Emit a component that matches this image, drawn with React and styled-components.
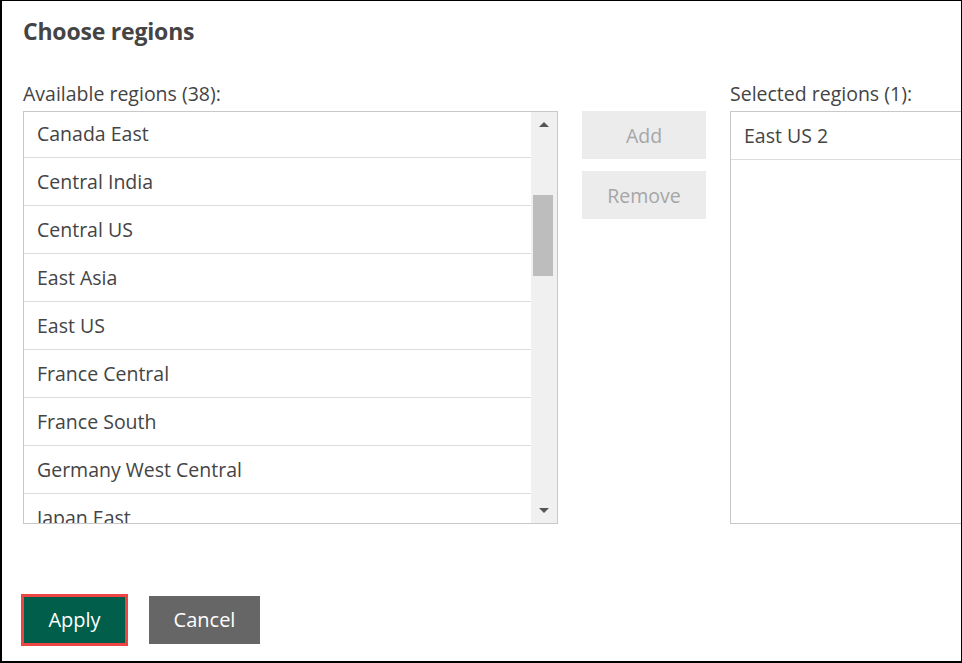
import React from 'react'
import styled, { createGlobalStyle } from 'styled-components'

const GlobalStyle = createGlobalStyle`
  html, body {
    margin: 0;
    padding: 0;
    background: #fff;
  }
  body {
    font-family: 'Open Sans', 'Liberation Sans', sans-serif;
    color: #444;
  }
`

const Frame = styled.div`
  box-sizing: border-box;
  width: 962px;
  height: 663px;
  border: 1px solid #000;
  border-left-width: 2px;
  border-bottom-width: 2px;
  overflow: hidden;
  padding: 14px 0 0 21px;
  display: flex;
  flex-direction: column;
`

const Title = styled.h2`
  margin: 0;
  font-size: 23px;
  font-weight: 700;
  color: #444;
  letter-spacing: -0.2px;
`

const Columns = styled.div`
  display: flex;
  gap: 24px;
  margin-top: 35px;
`

const Column = styled.div`
  display: flex;
  flex-direction: column;
  flex-shrink: 0;
  width: ${props => props.width}px;
`

const Label = styled.div`
  font-size: 19.5px;
  line-height: 24px;
  color: #444;
  margin-bottom: 5px;
  white-space: nowrap;
`

const ListBox = styled.div`
  box-sizing: border-box;
  height: 413px;
  border: 1px solid #c8c8c8;
  display: flex;
  overflow: hidden;
`

const Items = styled.div`
  flex: 1;
  overflow: hidden;
`

const ItemsInner = styled.div`
  margin-top: ${props => props.offset || 0}px;
`

const Item = styled.div`
  box-sizing: border-box;
  height: 48px;
  padding-left: 13px;
  display: flex;
  align-items: center;
  font-size: 19.5px;
  color: #444;
  border-bottom: 1px solid #dcdcdc;
  white-space: nowrap;
`

const Scrollbar = styled.div`
  width: 26px;
  background: #f0f0f0;
  position: relative;
  flex-shrink: 0;
`

const Arrow = styled.div`
  position: absolute;
  left: 8px;
  width: 0;
  height: 0;
  border-left: 5px solid transparent;
  border-right: 5px solid transparent;
  ${props => props.down
    ? 'bottom: 10px; border-top: 5px solid #555;'
    : 'top: 10px; border-bottom: 5px solid #555;'}
`

const Thumb = styled.div`
  position: absolute;
  left: 2px;
  width: 20px;
  top: 83px;
  height: 81px;
  background: #bdbdbd;
`

const ButtonStack = styled.div`
  display: flex;
  flex-direction: column;
  gap: 12px;
  padding-top: 29px;
`

const SideButton = styled.button`
  width: 124px;
  height: 48px;
  border: none;
  background: #ececec;
  color: #a6a6a6;
  font-family: inherit;
  font-size: 19.5px;
  padding: 0;
`

const Footer = styled.div`
  display: flex;
  align-items: center;
  gap: 21px;
  margin-top: auto;
  margin-bottom: 15px;
  margin-left: -2px;
`

const ActionButton = styled.button`
  box-sizing: border-box;
  height: ${props => (props.primary ? 52 : 48)}px;
  width: ${props => (props.primary ? 107 : 111)}px;
  border: ${props => (props.primary ? '3px solid #ef4444' : 'none')};
  background: ${props => (props.primary ? '#005e4a' : '#666666')};
  color: #fff;
  font-family: inherit;
  font-size: 20px;
  padding: 0 0 2px;
`

const available = [
  'Canada East',
  'Central India',
  'Central US',
  'East Asia',
  'East US',
  'France Central',
  'France South',
  'Germany West Central',
  'Japan East',
  'Japan West'
]

const App = () => {
  return (
    <>
      <GlobalStyle />
      <Frame>
        <Title>Choose regions</Title>
        <Columns>
          <Column width={535}>
            <Label>Available regions (38):</Label>
            <ListBox>
              <Items>
                <ItemsInner offset={-2}>
                  {available.map(name => (
                    <Item key={name}>{name}</Item>
                  ))}
                </ItemsInner>
              </Items>
              <Scrollbar>
                <Arrow />
                <Thumb />
                <Arrow down />
              </Scrollbar>
            </ListBox>
          </Column>
          <ButtonStack>
            <SideButton disabled>Add</SideButton>
            <SideButton disabled>Remove</SideButton>
          </ButtonStack>
          <Column width={535}>
            <Label>Selected regions (1):</Label>
            <ListBox>
              <Items>
                <Item>East US 2</Item>
              </Items>
            </ListBox>
          </Column>
        </Columns>
        <Footer>
          <ActionButton primary>Apply</ActionButton>
          <ActionButton>Cancel</ActionButton>
        </Footer>
      </Frame>
    </>
  )
}

export default App
